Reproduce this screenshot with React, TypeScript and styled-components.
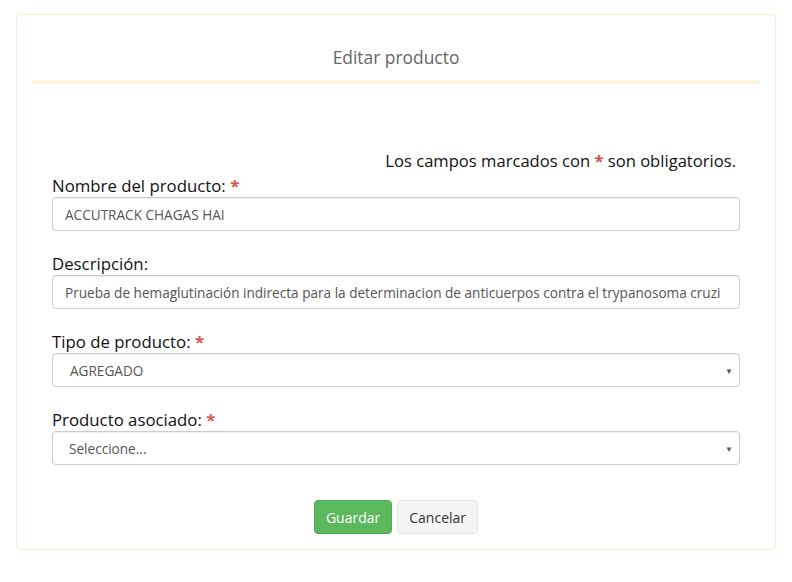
import styled, { createGlobalStyle } from 'styled-components';

const GlobalStyle = createGlobalStyle`
  body {
    margin: 0;
    background: #fff;
    font-family: "Comic Sans MS", "Open Sans", sans-serif;
  }
`;

const Required = () => <Star>*</Star>;

const App: React.FC = () => {
  return (
    <>
      <GlobalStyle />
      <Page>
        <Card>
          <CardHeader>
            <Title>Editar producto</Title>
          </CardHeader>
          <Form onSubmit={(e) => e.preventDefault()}>
            <Note>
              Los campos marcados con <Required /> son obligatorios.
            </Note>
            <Group>
              <Label>Nombre del producto: <Required /></Label>
              <Input defaultValue="ACCUTRACK CHAGAS HAI" />
            </Group>
            <Group>
              <Label>Descripción:</Label>
              <Input defaultValue="Prueba de hemaglutinación indirecta para la determinacion de anticuerpos contra el trypanosoma cruzi" />
            </Group>
            <Group>
              <Label>Tipo de producto: <Required /></Label>
              <SelectBox>
                <SelectText $indent={17}>AGREGADO</SelectText>
                <Caret>▼</Caret>
              </SelectBox>
            </Group>
            <Group>
              <Label>Producto asociado: <Required /></Label>
              <SelectBox>
                <SelectText $indent={16}>Seleccione...</SelectText>
                <Caret>▼</Caret>
              </SelectBox>
            </Group>
            <Actions>
              <Button $primary type="submit">Guardar</Button>
              <Button type="button">Cancelar</Button>
            </Actions>
          </Form>
        </Card>
      </Page>
    </>
  );
};

export default App;

const Page = styled.div`
  padding: 14px 16px 0 16px;
  width: 792px;
  box-sizing: border-box;
`;

const Card = styled.div`
  border: 1px solid #faebcc;
  border-radius: 4px;
  padding: 0 15px 14px 15px;
  box-sizing: border-box;
  height: 536px;
`;

const CardHeader = styled.div`
  border-bottom: 4px solid #fcf5e0;
  height: 69px;
  display: flex;
  align-items: flex-end;
  justify-content: center;
  padding-bottom: 12px;
  box-sizing: border-box;
`;

const Title = styled.h3`
  margin: 0;
  font-size: 17.4px;
  line-height: 22px;
  font-weight: normal;
  color: #666;
`;

const Form = styled.form`
  padding: 66px 20px 0 20px;
`;

const Note = styled.p`
  margin: 0 0 4px 0;
  text-align: right;
  font-size: 16.6px;
  line-height: 22px;
  color: #111;
  padding-right: 4px;
`;

const Star = styled.span`
  color: #d9534f;
  font-weight: bold;
`;

const Group = styled.div`
  display: flex;
  flex-direction: column;
  margin-bottom: 23px;
`;

const Label = styled.label`
  font-size: 16.8px;
  line-height: 20px;
  color: #111;
  margin-bottom: 1px;
`;

const Input = styled.input`
  height: 34px;
  box-sizing: border-box;
  border: 1px solid #ccc;
  border-radius: 4px;
  padding: 0 12px;
  font-family: inherit;
  font-size: 13.6px;
  color: #555;
  box-shadow: inset 0 1px 1px rgba(0, 0, 0, 0.075);
  outline: none;
`;

const SelectBox = styled.div`
  height: 34px;
  box-sizing: border-box;
  border: 1px solid #ccc;
  border-radius: 4px;
  display: flex;
  align-items: center;
  justify-content: space-between;
  padding-right: 6px;
  box-shadow: inset 0 1px 1px rgba(0, 0, 0, 0.075);
`;

const SelectText = styled.span<{ $indent: number }>`
  padding-left: ${(p) => p.$indent}px;
  font-size: 13.6px;
  color: #555;
`;

const Caret = styled.span`
  font-size: 8px;
  color: #555;
`;

const Actions = styled.div`
  display: flex;
  justify-content: center;
  gap: 5px;
  margin-top: 35px;
`;

const Button = styled.button<{ $primary?: boolean }>`
  height: 34px;
  padding: 0 11px;
  font-family: inherit;
  font-size: 14px;
  border-radius: 4px;
  border: 1px solid ${(p) => (p.$primary ? '#4cae4c' : '#e6e6e6')};
  background: ${(p) => (p.$primary ? '#5cb85c' : '#f5f5f5')};
  color: ${(p) => (p.$primary ? '#fff' : '#333')};
  cursor: pointer;
`;
